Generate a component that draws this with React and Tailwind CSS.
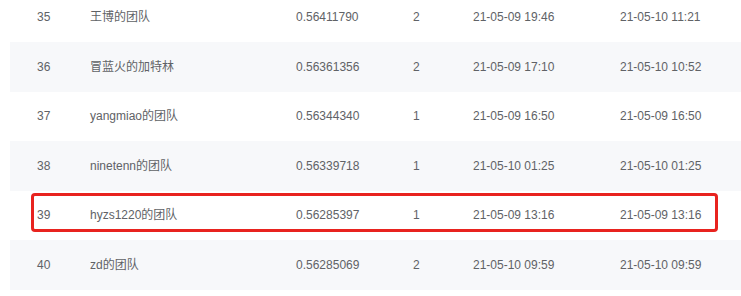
const rows = [
  { rank: 35, name: "王博的团队", score: "0.56411790", count: 2, first: "21-05-09 19:46", last: "21-05-10 11:21" },
  { rank: 36, name: "冒蓝火的加特林", score: "0.56361356", count: 2, first: "21-05-09 17:10", last: "21-05-10 10:52" },
  { rank: 37, name: "yangmiao的团队", score: "0.56344340", count: 1, first: "21-05-09 16:50", last: "21-05-09 16:50" },
  { rank: 38, name: "ninetenn的团队", score: "0.56339718", count: 1, first: "21-05-10 01:25", last: "21-05-10 01:25" },
  { rank: 39, name: "hyzs1220的团队", score: "0.56285397", count: 1, first: "21-05-09 13:16", last: "21-05-09 13:16", mark: true },
  { rank: 40, name: "zd的团队", score: "0.56285069", count: 2, first: "21-05-10 09:59", last: "21-05-10 09:59" },
];

function Row({ row, striped }) {
  return (
    <div className={`relative flex h-[49.5px] items-center ${striped ? "bg-[#f7f8fa]" : "bg-white"}`}>
      <div className="w-[80px] pl-[27px]">{row.rank}</div>
      <div className="w-[206px]">{row.name}</div>
      <div className="w-[117px]">{row.score}</div>
      <div className="w-[60px]">{row.count}</div>
      <div className="w-[147px]">{row.first}</div>
      <div className="flex-1">{row.last}</div>
      {/* highlighted row */}
      {row.mark && (
        <div className="absolute left-[21px] top-[2.5px] h-[39px] w-[687px] rounded-[4px] border-[3px] border-[#e8231f]" />
      )}
    </div>
  );
}

export default function App() {
  return (
    <div className="h-[296px] w-[741px] overflow-hidden bg-white pl-[10px] font-['Liberation_Sans','Noto_Sans_CJK_SC',sans-serif] text-[12px] text-[#606266]">
      <div className="-mt-[7.5px]">
        {rows.map((row, i) => (
          <Row key={row.rank} row={row} striped={i % 2 === 1} />
        ))}
      </div>
    </div>
  );
}
